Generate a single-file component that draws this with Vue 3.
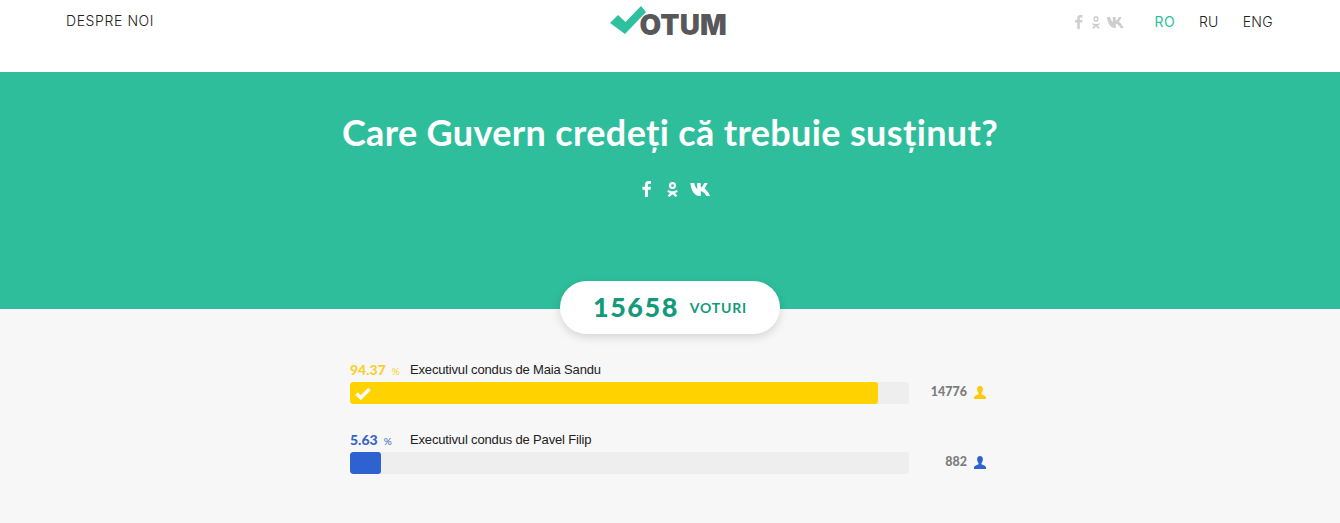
<script setup>
const rows = [
  { pct: 94.37, name: 'Executivul condus de Maia Sandu', count: 14776, color: '#ffd200', text: '#f9cf2d', icon: '#ffc90e', checked: true },
  { pct: 5.63, name: 'Executivul condus de Pavel Filip', count: 882, color: '#2d62d0', text: '#3a64c4', icon: '#2d62d0', checked: false },
]
</script>

<template>
  <div class="page">
    <header class="top">
      <a class="about">DESPRE NOI</a>
      <div class="logo">
        <svg class="logo-check" width="36" height="29" viewBox="0 0 36 29"><path d="M0 17 8 9l7.500 7L31 0l5 6-21 22z" fill="#2fc19f"/></svg>
        <span class="logo-text">OTUM</span>
      </div>
      <div class="top-right">
        <div class="social small">
          <svg width="8" height="14" viewBox="0 0 8 14"><path d="M2.200 14V7.600H0V5h2.200V3.300C2.200 1 3.500 0 5.400 0c.9 0 1.700.1 2.100.1v2.400H6.100c-1 0-1.300.5-1.300 1.200V5h2.700l-.4 2.600H4.800V14z"/></svg>
          <svg class="ok" width="8" height="13" viewBox="0 0 10 14" preserveAspectRatio="none"><path fill-rule="evenodd" d="M5 0a3.300 3.300 0 1 1 0 6.600A3.300 3.300 0 0 1 5 0zm0 2a1.300 1.300 0 1 0 0 2.600A1.300 1.300 0 0 0 5 2zM1 7.500c1.300.9 2.600 1.200 4 1.200s2.700-.3 4-1.200l.9 1.500c-.8.6-1.700 1-2.700 1.200L9.500 12.600 8 14l-3-2.600L2 14 .5 12.600l2.300-2.400C1.800 10 .9 9.600.1 9z"/></svg>
          <svg width="18" height="11" viewBox="0 0 18 11"><path d="M0 0h3.200c.6 2.300 1.500 4.200 2.600 5.100V0h3v3.800C10 3.400 11 1.900 11.700 0h3l-2.700 4.700c1 .8 3 2.700 4.800 6.300h-3.300c-.8-1.800-2-3.300-4.700-4.200V11H8C3.600 11 .7 7 0 0z"/></svg>
        </div>
        <nav class="langs">
          <a class="active">RO</a>
          <a>RU</a>
          <a>ENG</a>
        </nav>
      </div>
    </header>

    <section class="hero">
      <h1>Care Guvern credeți că trebuie susținut?</h1>
      <div class="social big">
        <svg width="10" height="16" viewBox="0 0 8 14"><path d="M2.200 14V7.600H0V5h2.200V3.300C2.200 1 3.500 0 5.400 0c.9 0 1.700.1 2.100.1v2.400H6.100c-1 0-1.300.5-1.300 1.200V5h2.700l-.4 2.600H4.800V14z"/></svg>
        <svg width="11" height="15" viewBox="0 0 10 14"><path fill-rule="evenodd" d="M5 0a3.300 3.300 0 1 1 0 6.600A3.300 3.300 0 0 1 5 0zm0 2a1.300 1.300 0 1 0 0 2.600A1.300 1.300 0 0 0 5 2zM1 7.500c1.300.9 2.600 1.200 4 1.200s2.700-.3 4-1.200l.9 1.500c-.8.600-1.700 1-2.700 1.200L9.500 12.600 8 14l-3-2.600L2 14 .5 12.600l2.300-2.400C1.800 10 .9 9.600.1 9z"/></svg>
        <svg class="vk" width="22" height="13" viewBox="0 0 18 11"><path d="M0 0h3.200c.6 2.300 1.500 4.200 2.600 5.100V0h3v3.800C10 3.400 11 1.900 11.700 0h3l-2.700 4.700c1 .8 3 2.700 4.800 6.300h-3.300c-.8-1.800-2-3.300-4.700-4.200V11H8C3.600 11 .7 7 0 0z"/></svg>
      </div>
    </section>

    <main class="results">
      <div class="pill">
        <span class="total">15658</span>
        <span class="votes">VOTURI</span>
      </div>

      <div class="list">
        <div v-for="r in rows" :key="r.name" class="row">
          <div class="label">
            <span class="pct" :style="{ color: r.text }">{{ r.pct }}<small>%</small></span>
            <span class="name">{{ r.name }}</span>
          </div>
          <div class="bar-line">
            <div class="track">
              <div class="fill" :style="{ width: r.pct + '%', background: r.color }">
                <svg v-if="r.checked" width="16" height="13" viewBox="0 0 16 13"><path d="M1.500 6.500 5.800 10.800 14.500 2" fill="none" stroke="#fff" stroke-width="3.400"/></svg>
              </div>
            </div>
            <span class="count">{{ r.count }}</span>
            <svg class="person" width="12" height="13" viewBox="0 0 12 13" :style="{ fill: r.icon }"><path d="M6 0c1.900 0 2.900 1.400 2.900 3.300 0 1.500-.6 2.800-1.400 3.600v1.300c.8.800 4.500 1.200 4.500 3.400V13H0v-1.400c0-2.200 3.700-2.600 4.500-3.400V6.900C3.700 6.100 3.100 4.800 3.100 3.300 3.100 1.400 4.100 0 6 0z"/></svg>
          </div>
        </div>
      </div>
    </main>
  </div>
</template>

<style>
html, body { margin: 0; background: #f7f7f7; overflow: hidden; }
</style>

<style scoped>
.page { height: 523px; display: flex; flex-direction: column; font-family: Lato, "Open Sans", sans-serif; background: #f7f7f7; }

.top { height: 72px; box-sizing: border-box; background: #fff; display: grid; grid-template-columns: 1fr auto 1fr; padding: 0 67px 0 66px; }
.about { font: 300 14px/42px Inter, sans-serif; color: #222; letter-spacing: .6px; white-space: nowrap; }
.logo { display: flex; align-items: flex-start; width: 118px; padding-top: 6px; margin-left: -2px; box-sizing: border-box; }
.logo-check { flex: none; }
.logo-text { font: 900 28px/27px Inter, sans-serif; color: #58585a; margin: 6px 0 0 -6px; letter-spacing: .1px; }
.top-right { display: flex; justify-content: flex-end; align-items: flex-start; padding-top: 14px; }
.social { display: flex; align-items: center; }
.social.small { gap: 9px; fill: #cfcfcf; height: 14px; margin: 1px 30px 0 0; }
.social.small .ok { margin-right: -2px; }
.langs { display: flex; gap: 24px; font: 300 14px/14px Inter, sans-serif; color: #222; letter-spacing: .3px; }
.langs a { padding-top: 1px; }
.langs .active { color: #2fbf9d; font-weight: 400; }

.hero { height: 237px; flex: none; background: #2ebe9b; display: flex; flex-direction: column; align-items: center; }
h1 { margin: 36px 0 0; font: 700 36px/48px Lato, sans-serif; color: #fff; letter-spacing: .35px; white-space: nowrap; }
.social.big { fill: #fff; gap: 15px; margin: 24px 0 0 14px; height: 18px; }
.social.big .vk { margin-left: -3px; }

.results { position: relative; display: flex; flex-direction: column; align-items: center; }
.pill { margin-top: -28px; width: 220px; height: 53px; box-sizing: border-box; border-radius: 27px; background: #fff; box-shadow: 0 3px 10px rgba(0,0,0,.14); display: flex; align-items: center; justify-content: center; gap: 11px; color: #149a7a; padding-bottom: 2px; }
.total { font: 900 27px/1 Lato, sans-serif; letter-spacing: 1.5px; }
.votes { font: 700 14px/1 Lato, sans-serif; letter-spacing: .8px; padding-top: 2px; }

.list { width: 640px; margin-top: 24px; display: flex; flex-direction: column; gap: 24px; }
.row { display: flex; flex-direction: column; }
.label { display: flex; align-items: center; height: 24px; }
.pct { width: 60px; font: 900 14px/22px Lato, sans-serif; white-space: nowrap; }
.pct small { font: 400 10px/22px Lato, sans-serif; margin-left: 6px; }
.name { font: 400 13px/22px "Liberation Sans", Arial, sans-serif; color: #222; letter-spacing: -.16px; }
.bar-line { display: flex; align-items: center; height: 22px; }
.track { width: 559px; height: 22px; background: #eee; border-radius: 3px; overflow: hidden; flex: none; }
.fill { height: 100%; border-radius: 3px; display: flex; align-items: center; padding-left: 5px; box-sizing: border-box; }
.count { flex: 1; text-align: right; font: 900 12.5px/20px Lato, sans-serif; color: #7d7d7d; margin-bottom: 2px; }
.person { flex: none; margin: 0 4px 2px 7px; }
</style>
